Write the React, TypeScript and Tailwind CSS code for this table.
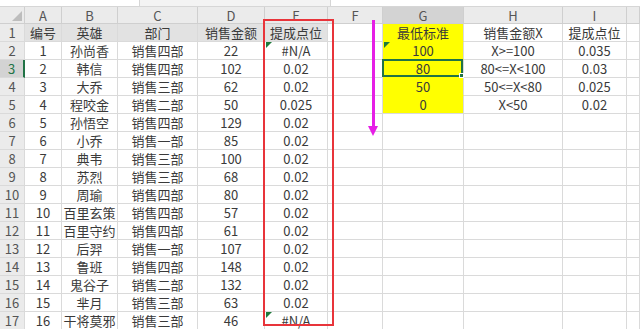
import React from "react";

const cols = ["A", "B", "C", "D", "E", "F", "G", "H", "I", ""];

const heroes: [string, string, string, string, string][] = [
  ["1", "孙尚香", "销售四部", "22", "#N/A"],
  ["2", "韩信", "销售四部", "102", "0.02"],
  ["3", "大乔", "销售三部", "62", "0.02"],
  ["4", "程咬金", "销售二部", "50", "0.025"],
  ["5", "孙悟空", "销售四部", "129", "0.02"],
  ["6", "小乔", "销售一部", "85", "0.02"],
  ["7", "典韦", "销售三部", "100", "0.02"],
  ["8", "苏烈", "销售三部", "68", "0.02"],
  ["9", "周瑜", "销售四部", "80", "0.02"],
  ["10", "百里玄策", "销售四部", "57", "0.02"],
  ["11", "百里守约", "销售四部", "61", "0.02"],
  ["12", "后羿", "销售一部", "107", "0.02"],
  ["13", "鲁班", "销售四部", "148", "0.02"],
  ["14", "鬼谷子", "销售二部", "132", "0.02"],
  ["15", "芈月", "销售三部", "63", "0.02"],
  ["16", "干将莫邪", "销售三部", "46", "#N/A"],
];

const lookup: [string, string, string][] = [
  ["最低标准", "销售金额X", "提成点位"],
  ["100", "X>=100", "0.035"],
  ["80", "80<=X<100", "0.03"],
  ["50", "50<=X<80", "0.025"],
  ["0", "X<50", "0.02"],
];

// little green "number stored as text" marker
function Tri() {
  return (
    <span className="absolute left-[1px] top-0 w-0 h-0 border-t-[6px] border-t-[#1e7a3c] border-r-[6px] border-r-transparent" />
  );
}

function Cell({
  children,
  className = "",
}: {
  children?: React.ReactNode;
  className?: string;
}) {
  return (
    <div
      className={`relative flex items-center justify-center h-[18px] border-r border-b border-[#dadada] whitespace-nowrap ${className}`}
    >
      {children}
    </div>
  );
}

export default function App() {
  const rows: React.ReactNode[] = [];

  for (let r = 1; r <= 17; r++) {
    const isSel = r === 3;
    rows.push(
      <Cell
        key={`h${r}`}
        className={
          isSel
            ? "bg-[#d3d3d3] text-[#217346] border-r-2 border-r-[#217346]"
            : "bg-[#ebebeb] text-[#555]"
        }
      >
        {r}
      </Cell>
    );

    const hero = r === 1 ? ["编号", "英雄", "部门", "销售金额", "提成点位"] : heroes[r - 2];
    hero.forEach((v, i) => {
      rows.push(
        <Cell
          key={`c${r}-${i}`}
          className={r === 1 ? "bg-[#e2e2e2] border-[#d4d4d4]" : ""}
        >
          {r > 1 && i === 4 && v === "#N/A" && <Tri />}
          {v}
        </Cell>
      );
    });

    rows.push(<Cell key={`f${r}`} />);

    const lk = r <= 5 ? lookup[r - 1] : ["", "", ""];
    rows.push(
      <Cell
        key={`g${r}`}
        className={
          r <= 5
            ? r < 5
              ? "bg-[#ffff00] border-b-[#ffff00]"
              : "bg-[#ffff00]"
            : ""
        }
      >
        {r === 2 && <Tri />}
        {isSel && (
          <span className="absolute -left-[1px] -top-[1px] right-0 bottom-0 border-2 border-[#217346]">
            <span className="absolute -right-[3px] -bottom-[3px] w-[5px] h-[5px] bg-[#217346] border border-white" />
          </span>
        )}
        {lk[0]}
      </Cell>
    );
    rows.push(<Cell key={`hh${r}`}>{lk[1]}</Cell>);
    rows.push(<Cell key={`i${r}`}>{lk[2]}</Cell>);
    rows.push(<Cell key={`j${r}`} />);
  }

  return (
    <div
      className="relative w-[640px] h-[329px] overflow-hidden bg-white text-[13px] text-[#3a3a3a]"
      style={{ fontFamily: '"Noto Sans CJK SC", "Noto Sans", sans-serif' }}
    >
      <div className="h-[7px] bg-[#f3f3f3] border-b border-[#d6d6d6] flex">
        <div className="w-[140px] bg-white border-r border-[#d6d6d6]" />
        <div className="w-[190px]" />
        <div className="flex-1 bg-white border-l border-[#d6d6d6]" />
      </div>
      <div className="grid grid-cols-[25px_37px_56px_80px_67px_63px_55px_81px_99px_64px_1fr] leading-none">
        <div className="relative h-[17px] bg-[#ebebeb] border-r border-b border-[#cfcfcf]">
          <span className="absolute right-[2px] bottom-[2px] w-0 h-0 border-b-[10px] border-b-[#bdbdbd] border-l-[10px] border-l-transparent" />
        </div>
        {cols.map((c) => (
          <div
            key={c || "x"}
            className={`flex items-center justify-center h-[17px] border-r border-b border-[#cfcfcf] text-[#555] ${
              c === "G" ? "bg-[#d3d3d3]" : "bg-[#ebebeb]"
            }`}
          >
            {c}
          </div>
        ))}
        {rows}
      </div>

      {/* red highlight box */}
      <div className="absolute left-[263px] top-[19px] w-[71px] h-[307px] border-2 border-[#e8343a] pointer-events-none" />

      {/* magenta arrow */}
      <div className="absolute left-[372px] top-[20px] w-[3px] h-[108px] bg-[#e61ee6]" />
      <div className="absolute left-[368px] top-[126px] w-0 h-0 border-l-[5.5px] border-l-transparent border-r-[5.5px] border-r-transparent border-t-[10px] border-t-[#e61ee6]" />
    </div>
  );
}
